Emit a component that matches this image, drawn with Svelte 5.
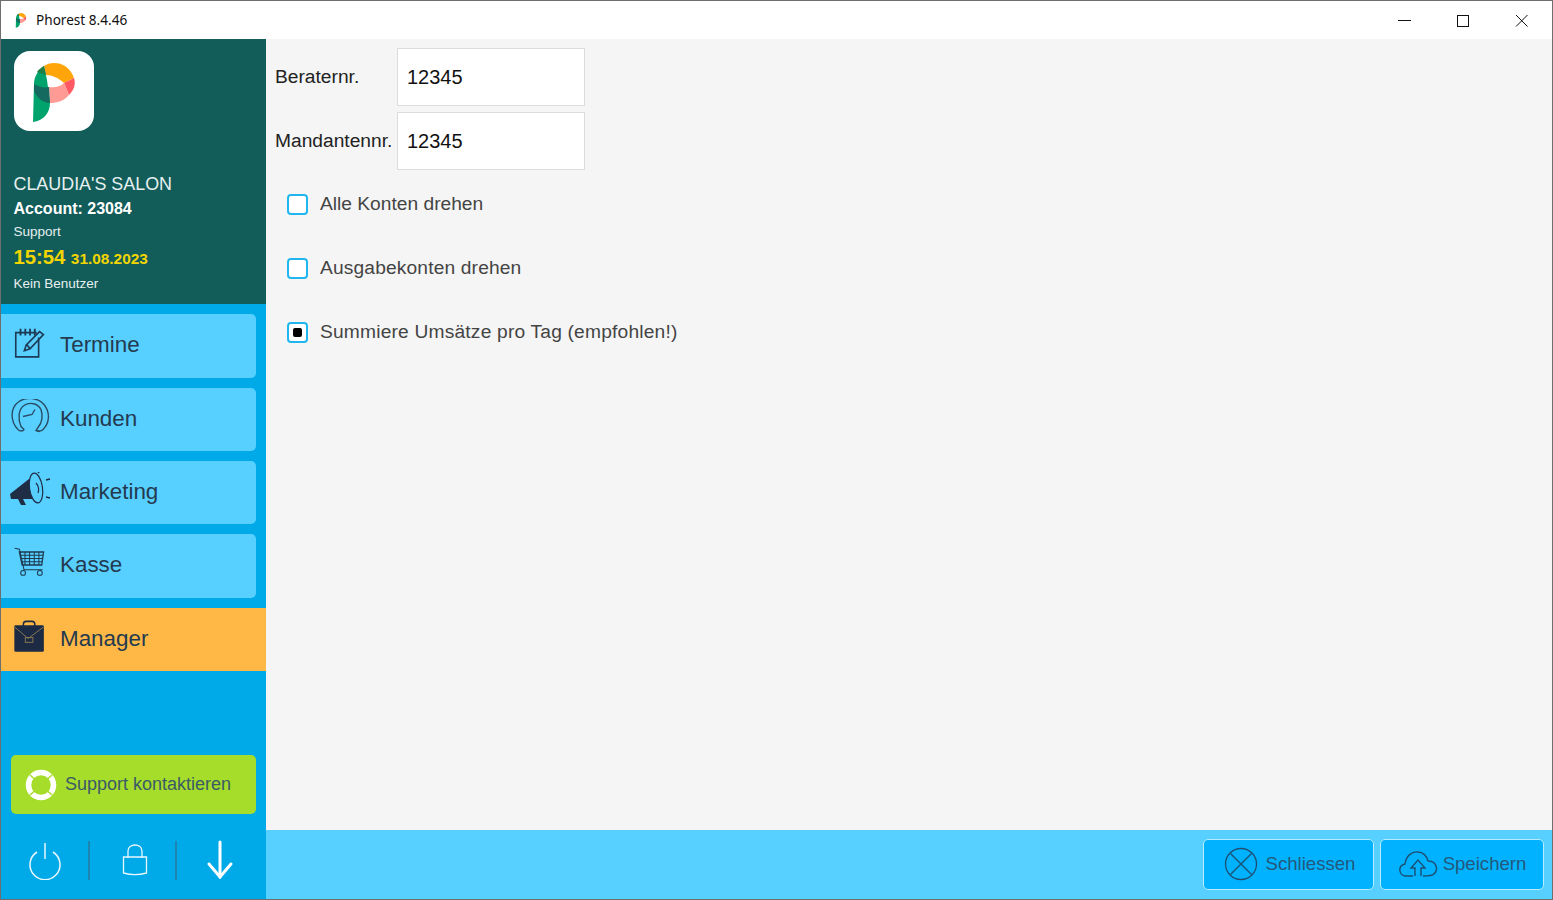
<script>
	const navItems = [
		{ label: 'Termine', icon: 'termine', height: 64 },
		{ label: 'Kunden', icon: 'kunden', height: 63 },
		{ label: 'Marketing', icon: 'marketing', height: 63 },
		{ label: 'Kasse', icon: 'kasse', height: 64 },
		{ label: 'Manager', icon: 'manager', height: 63, active: true }
	];
	const fields = [
		{ label: 'Beraternr.', value: '12345' },
		{ label: 'Mandantennr.', value: '12345' }
	];
	const checks = [
		{ label: 'Alle Konten drehen', checked: false },
		{ label: 'Ausgabekonten drehen', checked: false },
		{ label: 'Summiere Umsätze pro Tag (empfohlen!)', checked: true }
	];
</script>

{#snippet logo(size)}
	<svg viewBox="0 0 80 80" width={size} height={size}>
		<path d="M30 15 C38 9 55 11 60 27 L50 32 C45 27 38 24 32 24 Z" fill="#ffa50a"/>
		<path d="M50 32 L60 27 C62 33 60 39 55 44 Z" fill="#ff5a64"/>
		<path d="M35 36 C40 37 46 36 50 32 L55 44 C50 50 43 52 36 52 Z" fill="#ff9a94"/>
		<path d="M30 15 C24 19 20 26 20 33 L19 71 C29 70 36 62 36 52 L33 29 Z" fill="#00a36c"/>
		<path d="M20 33 C25 36 30 37 35 36 L36 52 C29 52 23 47 20 40 Z" fill="#146a5e"/>
		<path d="M23 21 C25 18 27 17 30 15 L32 24 C29 23 26 22 23 21 Z" fill="#1f7f45"/>
	</svg>
{/snippet}

{#snippet navIcon(name)}
	{#if name === 'termine'}
		<svg viewBox="1 2 42 42" width="40" height="40" fill="none" stroke="#1d3a55" stroke-width="1.700">
			<path d="M30 15 V35.500 H6 V10 H28"/>
			<path d="M11 6 V13 M16 6 V13 M21 6 V13 M26 6 V13" stroke-width="1.900"/>
			<path d="M15 29 L17 23 L31 9 L35 12 L21 27 Z M18 23 L21 27"/>
		</svg>
	{:else if name === 'kunden'}
		<svg viewBox="1 3.500 40 40" width="40" height="40" fill="none" stroke="#2a4d66" stroke-width="1.400">
			<path d="M8 34 C0 26 0 12 9 6 C17 1 28 2 34 9 C41 18 39 28 33 34 C31 36 28 36 27 35"/>
			<path d="M8 34 C10 36 13 36 14 34 L11 31 C8 24 8 14 14 10 C20 6 28 8 31 14 C33 20 32 27 28 32 L26 35 L30 36"/>
			<path d="M13 21 L22 19 L25 14"/>
		</svg>
	{:else if name === 'marketing'}
		<svg viewBox="1 2 42 40" width="42" height="40" fill="none" stroke="#1f2d45" stroke-width="1.200">
			<path d="M1 24 L25 5 L29 29 L14 29 L17 35 L12 35 L9 29 L2 29 Z" fill="#1f2d45" stroke="none"/>
			<ellipse cx="27" cy="18" rx="6.500" ry="15" transform="rotate(-8 27 18)" fill="#57cfff"/>
			<path d="M27 13 C30 16 30 21 29 23"/>
			<path d="M29 3 L32 0 M37 10 L41 9 M37 27 L41 28" stroke-width="1.300"/>
		</svg>
	{:else if name === 'kasse'}
		<svg viewBox="0 3.500 43 43" width="40" height="40" fill="none" stroke="#1f3a50" stroke-width="1.100">
			<path d="M4 7 L9 8 L14 30 H34"/>
			<path d="M9 11 H35 L33 25 H12 Z" stroke-width="1.400"/>
			<path d="M10 14.500 H34.500 M11 18 H34 M12 21.500 H33.500 M15 11 V25 M20 11 V25 M25 11 V25 M30 11 V25"/>
			<circle cx="13" cy="33.500" r="2.600"/>
			<circle cx="31" cy="33.500" r="2.600"/>
		</svg>
	{:else}
		<svg viewBox="2 3.500 42 42" width="40" height="40">
			<path d="M15 11 V9 C15 7 16 6 18 6 H24 C26 6 27 7 27 9 V11" fill="none" stroke="#1d2a44" stroke-width="1.600"/>
			<rect x="5.500" y="10" width="31" height="28" rx="1.500" fill="#1d2a44"/>
			<path d="M6 12 L20 24 L36 12" fill="none" stroke="#8a7a50" stroke-width="1"/>
			<rect x="17" y="23" width="8" height="5" fill="none" stroke="#8a7a50" stroke-width="1"/>
		</svg>
	{/if}
{/snippet}

<div class="window">
	<header class="titlebar">
		<span class="app-icon">{@render logo(20)}</span>
		<span class="app-title">Phorest 8.4.46</span>
		<div class="controls">
			<svg viewBox="0 0 58 38" width="58" height="38"><path d="M23 19.500 H36" stroke="#111" stroke-width="1"/></svg>
			<svg viewBox="0 0 58 38" width="58" height="38"><rect x="23.500" y="14.500" width="11" height="11" fill="none" stroke="#111" stroke-width="1"/></svg>
			<svg viewBox="0 0 58 38" width="58" height="38"><path d="M23 14 L34.500 25.500 M34.500 14 L23 25.500" stroke="#111" stroke-width="1"/></svg>
		</div>
	</header>

	<div class="body">
		<aside class="sidebar">
			<div class="salon">
				<div class="logo">{@render logo(80)}</div>
				<div class="salon-name">CLAUDIA'S SALON</div>
				<div class="account">Account: 23084</div>
				<div class="small role">Support</div>
				<div class="clock"><span class="time">15:54</span> <span class="date">31.08.2023</span></div>
				<div class="small user">Kein Benutzer</div>
			</div>

			<nav class="nav">
				{#each navItems as item}
					<button class="nav-item" class:active={item.active} style="height: {item.height}px">
						<span class="nav-icon">{@render navIcon(item.icon)}</span>
						{item.label}
					</button>
				{/each}
			</nav>

			<button class="support">
				<svg viewBox="0 0 32 32" width="32" height="32" fill="none">
					<circle cx="16" cy="16" r="12.500" stroke="#fff" stroke-width="5.500"/>
					<path d="M5 6 L10 10.500 M27 6 L22 10.500 M5 26 L10 21.500 M27 26 L22 21.500" stroke="#a6dd2b" stroke-width="1.500"/>
				</svg>
				Support kontaktieren
			</button>

			<div class="tools">
				<svg viewBox="0 0 36 40" width="36" height="40" fill="none" stroke="#e8f8ff" stroke-width="1.500">
					<path d="M10 12 A15 15 0 1 0 26 12"/>
					<path d="M18 3 V19"/>
				</svg>
				<span class="sep"></span>
				<svg viewBox="0 0 30 36" width="30" height="36" fill="none" stroke="#e8f8ff" stroke-width="1.300">
					<path d="M8 16 V9 C8 1 22 1 22 9 V16"/>
					<path d="M3.500 15 H26.500 V31 C19 33 11 33 3.500 31 Z"/>
				</svg>
				<span class="sep"></span>
				<svg viewBox="0 0 30 40" width="30" height="40" fill="none" stroke="#fff" stroke-width="3" stroke-linecap="round">
					<path d="M15 2 V37"/>
					<path d="M4 24 L15 37 L26 24"/>
				</svg>
			</div>
		</aside>

		<main class="main">
			<div class="content">
				{#each fields as field}
					<div class="field">
						<label for={field.label}>{field.label}</label>
						<input id={field.label} value={field.value} readonly />
					</div>
				{/each}

				<div class="checks">
					{#each checks as check}
						<div class="check">
							<span class="box">{#if check.checked}<span class="mark"></span>{/if}</span>
							<span>{check.label}</span>
						</div>
					{/each}
				</div>
			</div>

			<footer class="footer">
				<button class="action close">
					<svg viewBox="0 0 34 34" width="34" height="34" fill="none" stroke="#1d4f72" stroke-width="1.300">
						<circle cx="17" cy="17" r="15.500"/>
						<path d="M6.500 6.500 L27.500 27.500 M27.500 6.500 L6.500 27.500"/>
					</svg>
					Schliessen
				</button>
				<button class="action save">
					<svg viewBox="0 0 40 30" width="40" height="30" fill="none" stroke="#1d4f72" stroke-width="1.400">
						<path d="M15 27 H8 C1 27 -1 17 7 15 C8 7 14 2 20 3 C25 3 29 7 30 12 C38 12 41 20 36 25 C34 27 31 27 25 27"/>
						<path d="M17 27 V19 H13 L20 11 L27 19 H23 V27"/>
					</svg>
					Speichern
				</button>
			</footer>
		</main>
	</div>
</div>

<style>
	:global(body) {
		margin: 0;
		font-family: "Liberation Sans", Arial, sans-serif;
	}

	button {
		font-family: inherit;
		border: 0;
		padding: 0;
		cursor: pointer;
	}

	.window {
		display: flex;
		flex-direction: column;
		box-sizing: border-box;
		width: 1553px;
		height: 900px;
		border: 1px solid #6e6e6e;
		background: #f5f5f5;
		overflow: hidden;
	}

	.titlebar {
		display: flex;
		align-items: center;
		flex: none;
		height: 38px;
		background: #fff;
	}

	.app-icon {
		display: flex;
		margin-left: 10px;
	}

	.app-title {
		margin-left: 5px;
		margin-bottom: 2px;
		font-family: "Noto Sans", sans-serif;
		font-size: 13.600px;
		color: #111;
	}

	.controls {
		display: flex;
		margin-left: auto;
		margin-right: 1px;
		gap: 1px;
	}

	.body {
		display: flex;
		flex: 1;
		min-height: 0;
	}

	.sidebar {
		display: flex;
		flex-direction: column;
		flex: none;
		width: 265px;
		background: #00a9e8;
	}

	.salon {
		box-sizing: border-box;
		height: 265px;
		padding: 12px 0 0 12.500px;
		background: #125c59;
		color: #e6f0ef;
	}

	.logo {
		display: flex;
		width: 80px;
		height: 80px;
		margin-bottom: 42px;
		border-radius: 16px;
		background: #fff;
	}

	.salon-name {
		font-size: 17.900px;
		line-height: 22px;
	}

	.account {
		margin-top: 4px;
		font-size: 16px;
		font-weight: bold;
		line-height: 20px;
		color: #fff;
	}

	.small {
		font-size: 13.500px;
		line-height: 16px;
	}

	.role {
		margin-top: 5px;
	}

	.clock {
		margin-top: 4px;
		font-weight: bold;
		color: #f2d500;
		line-height: 26px;
		word-spacing: 1px;
	}

	.time {
		font-size: 20.300px;
	}

	.date {
		font-size: 15.400px;
	}

	.user {
		margin-top: 4px;
	}

	.nav {
		display: flex;
		flex-direction: column;
		gap: 10px;
		padding-top: 10px;
	}

	.nav-item {
		display: flex;
		align-items: center;
		box-sizing: border-box;
		padding-bottom: 2px;
		width: 255px;
		background: #57cfff;
		border-radius: 0 5px 5px 0;
		font-size: 22.400px;
		color: #243a50;
		text-align: left;
	}

	.nav-item.active {
		width: 265px;
		border-radius: 0;
		background: #ffb846;
	}

	.nav-icon {
		display: flex;
		justify-content: center;
		flex: none;
		width: 59px;
	}

	.support {
		display: flex;
		align-items: center;
		gap: 8px;
		box-sizing: border-box;
		width: 245px;
		height: 59px;
		margin: auto 0 0 10px;
		padding-left: 14px;
		border-radius: 5px;
		background: #a6dd2b;
		font-size: 18px;
		color: #3a5a66;
	}

	.tools {
		display: flex;
		align-items: center;
		flex: none;
		height: 85px;
		padding-top: 7px;
		box-sizing: border-box;
	}

	.tools svg:nth-child(1) {
		margin-left: 26px;
	}

	.tools svg:nth-child(3) {
		margin-left: 30px;
	}

	.tools svg:nth-child(5) {
		margin-left: 28px;
	}

	.sep {
		width: 2px;
		height: 39px;
		margin-left: 25px;
		background: #1e85b0;
	}

	.tools svg:nth-child(3) + .sep {
		margin-left: 25px;
	}

	.main {
		display: flex;
		flex-direction: column;
		flex: 1;
		min-width: 0;
	}

	.content {
		flex: 1;
		padding: 9px 0 0 9px;
	}

	.field {
		display: flex;
		align-items: center;
		height: 58px;
		margin-bottom: 6px;
	}

	label {
		width: 122px;
		flex: none;
		font-size: 19.200px;
		color: #222;
	}

	input {
		box-sizing: border-box;
		width: 188px;
		height: 58px;
		padding: 0 0 0 9px;
		border: 1.500px solid #dcdcdc;
		outline: 0;
		background: #fff;
		font-family: inherit;
		font-size: 20px;
		color: #111;
	}

	.checks {
		display: flex;
		flex-direction: column;
		gap: 20px;
		padding: 6px 0 0 12px;
	}

	.check {
		display: flex;
		align-items: center;
		gap: 12px;
		height: 44px;
		font-size: 19.200px;
		color: #444;
	}

	.check:nth-child(2) {
		letter-spacing: 0.15px;
	}

	.check:nth-child(3) {
		letter-spacing: 0.19px;
	}

	.box {
		display: flex;
		align-items: center;
		justify-content: center;
		box-sizing: border-box;
		width: 21px;
		height: 21px;
		border: 2px solid #22b6ee;
		border-radius: 4px;
		background: #fff;
	}

	.mark {
		width: 9px;
		height: 9px;
		border-radius: 2px;
		background: #000;
	}

	.footer {
		display: flex;
		align-items: flex-start;
		justify-content: flex-end;
		gap: 6px;
		flex: none;
		height: 69px;
		padding: 9px 8px 0 0;
		box-sizing: border-box;
		background: #57cfff;
	}

	.action {
		display: flex;
		align-items: center;
		justify-content: center;
		gap: 8px;
		box-sizing: border-box;
		height: 51px;
		padding-bottom: 2px;
		border: 1.500px solid #b5ecff;
		border-radius: 5px;
		background: #00b2ff;
		font-size: 18.600px;
		color: #24587c;
	}

	.close {
		width: 171px;
		padding-left: 2px;
	}

	.save {
		width: 164px;
		gap: 5px;
	}
</style>
